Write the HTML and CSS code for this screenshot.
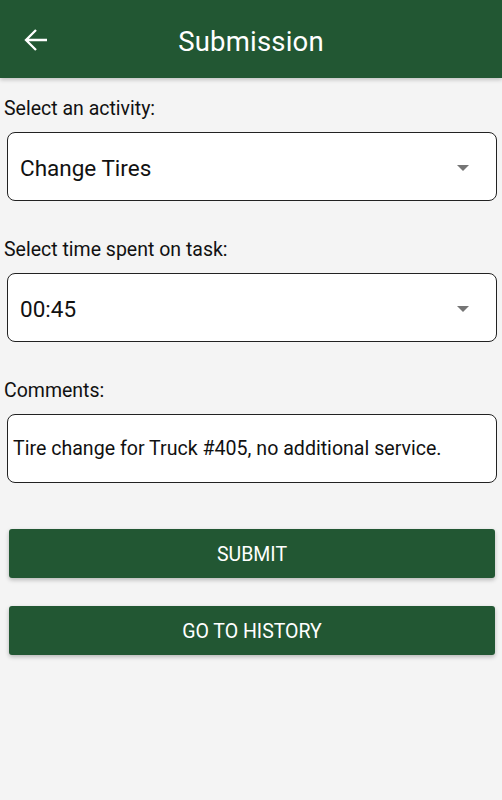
FILE: index.html
```html
<!DOCTYPE html>
<html lang="en">
<head>
    <meta charset="UTF-8">
    <meta name="viewport" content="width=device-width, initial-scale=1.0">
    <title>Submission</title>
    <link rel="stylesheet" href="styles.css">
</head>
<body>
    <header class="topbar">
        <span class="back">
            <svg width="24" height="24" viewBox="0 0 24 24">
                <path d="M23 12H2 M12 2 L2 12 L12 22" fill="none" stroke="#fff" stroke-width="2.3"/>
            </svg>
        </span>
        <h1 class="title">Submission</h1>
    </header>

    <main class="form">
        <div class="field">
            <label class="field-label">Select an activity:</label>
            <div class="select">
                <span>Change Tires</span>
                <span class="caret"></span>
            </div>
        </div>
        <div class="field">
            <label class="field-label">Select time spent on task:</label>
            <div class="select">
                <span>00:45</span>
                <span class="caret"></span>
            </div>
        </div>
        <div class="field">
            <label class="field-label">Comments:</label>
            <div class="comment">Tire change for Truck #405, no additional service.</div>
        </div>

        <button class="btn btn-first">SUBMIT</button>
        <button class="btn">GO TO HISTORY</button>
    </main>
</body>
</html>
```

FILE: styles.css
```css
body {
    margin: 0;
    background-color: #f4f4f4;
    font-family: Roboto, "Noto Sans", sans-serif;
    color: #111;
    height: 800px;
}
.topbar {
    position: relative;
    height: 78px;
    background: #225733;
    display: flex;
    align-items: center;
    justify-content: center;
    box-shadow: 0px 2px 4px rgba(0, 0, 0, 0.2);
}
.back {
    position: absolute;
    left: 24px;
    top: 28px;
    width: 24px;
    height: 24px;
}
.title {
    margin: 0;
    color: #fff;
    font-size: 27.5px;
    font-weight: 400;
    letter-spacing: 0.2px;
    padding-top: 4px;
}
.form {
    padding: 18px 5px 0 4px;
}
.field {
    margin-bottom: 36px;
}
.field-label {
    display: block;
    font-size: 19.5px;
    line-height: 24px;
    padding-top: 1px;
    margin-bottom: 11px;
}
.select,
.comment {
    box-sizing: border-box;
    height: 69px;
    margin-left: 3px;
    background: #fff;
    border: 1.5px solid #222;
    border-radius: 8px;
    display: flex;
    align-items: center;
}
.select {
    justify-content: space-between;
    padding: 2px 27px 0 12px;
    font-size: 22.5px;
}
.caret {
    width: 0;
    height: 0;
    border-left: 6.5px solid transparent;
    border-right: 6.5px solid transparent;
    border-top: 6.5px solid #757575;
}
.comment {
    padding: 0 5px;
    font-size: 19.6px;
}
.btn {
    display: block;
    box-sizing: border-box;
    width: 486px;
    height: 49px;
    margin: 0 0 28px 5px;
    padding-top: 3px;
    border: none;
    border-radius: 3px;
    background: #225733;
    color: #fff;
    font-family: Roboto, sans-serif;
    font-size: 19.5px;
    box-shadow: 0px 2px 4px rgba(0, 0, 0, 0.25);
}
.btn-first {
    margin-top: 46px;
}
```
